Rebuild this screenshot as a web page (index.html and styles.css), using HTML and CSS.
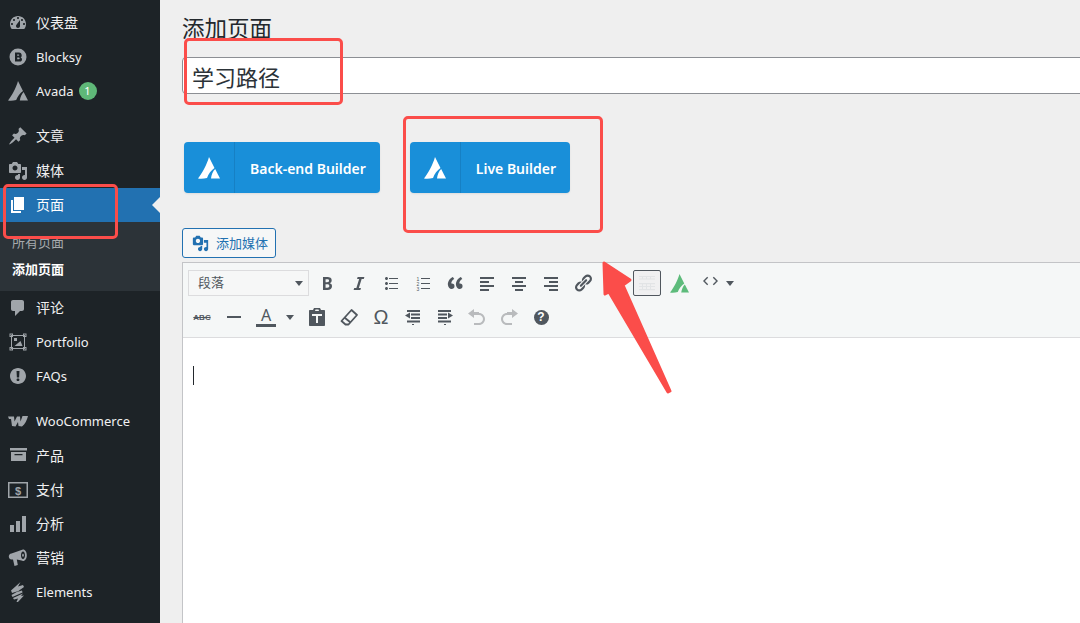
FILE: index.html
```html
<!DOCTYPE html>
<html lang="zh-CN">
<head>
  <meta charset="UTF-8" />
  <meta name="viewport" content="width=device-width, initial-scale=1.0"/>
  <title>添加页面</title>
  <link rel="stylesheet" href="styles.css">
</head>
<body>
  <aside class="sidebar">
    <nav class="menu">
      <a class="menu-item"><svg class="menu-icon" viewBox="0 0 20 20"><path fill-rule="evenodd" d="M3.76 16h12.48c1.1-1.37 1.76-3.11 1.76-5 0-4.42-3.58-8-8-8s-8 3.58-8 8c0 1.89.66 3.63 1.76 5zM10 4c.55 0 1 .45 1 1s-.45 1-1 1-1-.45-1-1 .45-1 1-1zM6 6c.55 0 1 .45 1 1s-.45 1-1 1-1-.45-1-1 .45-1 1-1zm8 0c.55 0 1 .45 1 1s-.45 1-1 1-1-.45-1-1 .45-1 1-1zm-5.37 5.55L12 7v6c0 1.1-.9 2-2 2s-2-.9-2-2c0-.57.24-1.08.63-1.45zM4 10c.55 0 1 .45 1 1s-.45 1-1 1-1-.45-1-1 .45-1 1-1zm12 0c.55 0 1 .45 1 1s-.45 1-1 1-1-.45-1-1 .45-1 1-1z"/></svg><span class="zh">仪表盘</span></a>
      <a class="menu-item"><svg class="menu-icon" viewBox="0 0 20 20"><path fill-rule="evenodd" d="M10 1.5a8.5 8.5 0 1 1 0 17 8.5 8.5 0 0 1 0-17zM7 5.5v9h5c1.2 0 2-.9 2-2.1 0-.9-.5-1.7-1.300-2 .6-.3 1-1 1-1.900 0-1.700-1-3-2.700-3zm2.200 1.900h1.300c.5 0 .8.300.8.700s-.3.700-.8.700H9.200zm0 3.200h1.700c.5 0 .8.300.8.800s-.3.800-.8.800H9.200z"/></svg>Blocksy</a>
      <a class="menu-item"><svg class="menu-icon" viewBox="0 0 20 20"><path d="M0 19.5C4 14.5 8 7 10 0l5 10C12 12 9.500 15.500 8.200 19c-2.700.7-5.500.9-8.200.5z"/><path d="M11.800 19.500c.5-3.500 1.800-6.500 3.800-8.500l4.400 8.500z"/></svg>Avada<span class="badge">1</span></a>

      <div class="menu-sep"></div>

      <a class="menu-item"><svg class="menu-icon" viewBox="0 0 20 20"><path d="M10.44 3.02l1.82-1.820 6.360 6.350-1.830 1.820c-1.050-.68-2.480-.57-3.410.36l-.75.75c-.92.93-1.040 2.350-.35 3.410l-1.830 1.820-2.410-2.410-2.800 2.790c-.42.42-3.380 2.710-3.800 2.290s1.860-3.390 2.280-3.810l2.790-2.790L4.100 9.360l1.830-1.820c1.050.69 2.480.57 3.400-.36l.75-.75c.93-.92 1.050-2.350.36-3.410z"/></svg><span class="zh">文章</span></a>
      <a class="menu-item"><svg class="menu-icon" viewBox="0 0 20 20"><path fill-rule="evenodd" d="M13 11V4c0-.55-.45-1-1-1h-1.670L9 1H5L3.670 3H2c-.55 0-1 .45-1 1v7c0 .55.45 1 1 1h10c.55 0 1-.45 1-1zM7 4.500c1.380 0 2.500 1.120 2.500 2.500S8.380 9.500 7 9.500 4.500 8.380 4.500 7 5.620 4.500 7 4.500zM14 6h5v10.500c0 1.380-1.120 2.500-2.500 2.500S14 17.880 14 16.500s1.120-2.500 2.500-2.500c.17 0 .34.02.5.05V9h-3V6zm-4 8.050V13h2v3.500c0 1.380-1.120 2.500-2.500 2.500S7 17.880 7 16.500 8.120 14 9.500 14c.17 0 .34.02.5.05z"/></svg><span class="zh">媒体</span></a>
      <a class="menu-item active"><svg class="menu-icon" viewBox="0 0 20 20"><path d="M6 15V2h10v13H6zm-1 1h8v2H3V5h2v11z"/></svg><span class="zh">页面</span></a>
      <div class="submenu">
        <a class="submenu-item">所有页面</a>
        <a class="submenu-item current">添加页面</a>
      </div>
      <a class="menu-item"><svg class="menu-icon" viewBox="0 0 20 20"><path d="M5 2h9c1.100 0 2 .9 2 2v7c0 1.100-.9 2-2 2h-2l-5 5v-5H5c-1.100 0-2-.9-2-2V4c0-1.100.9-2 2-2z"/></svg><span class="zh">评论</span></a>
      <a class="menu-item"><svg class="menu-icon portfolio" viewBox="0 0 20 20"><rect x="3.5" y="3.5" width="13" height="13"/><rect x="2" y="2" width="2.5" height="2.5"/><rect x="15.5" y="2" width="2.5" height="2.5"/><rect x="2" y="15.5" width="2.5" height="2.5"/><rect x="15.5" y="15.5" width="2.5" height="2.5"/><path d="M6 6h3v3H6zm6.500 3l2 5h-8z"/></svg>Portfolio</a>
      <a class="menu-item"><svg class="menu-icon" viewBox="0 0 20 20"><path fill-rule="evenodd" d="M10 2c4.420 0 8 3.580 8 8s-3.580 8-8 8-8-3.580-8-8 3.580-8 8-8zm1.130 9.380l.35-6.460H8.520l.35 6.460h2.260zm-.09 3.360c.24-.23.37-.55.37-.96 0-.42-.12-.74-.36-.97s-.59-.35-1.060-.35-.82.12-1.070.35-.37.55-.37.97c0 .41.13.73.38.96.26.23.61.34 1.060.34s.8-.11 1.050-.34z"/></svg>FAQs</a>

      <div class="menu-sep"></div>

      <a class="menu-item"><svg class="menu-icon woo" viewBox="0 0 20 12"><path d="M0 1.500h6l.5 5L9 1.500h3l.5 5 2-5.500H20c-1 4-3 8.500-6 10.500l-3.500-.5-.5-4-2.500 4.500-3.500-.5L3 4H1z"/></svg>WooCommerce</a>
      <a class="menu-item"><svg class="menu-icon" viewBox="0 0 20 20"><path fill-rule="evenodd" d="M2 3h17v2.500H2zm1 4h15v9H3zm3.500 2v1.300h8V9z"/></svg><span class="zh">产品</span></a>
      <a class="menu-item"><svg class="menu-icon" viewBox="0 0 20 20"><path fill-rule="evenodd" d="M0 2h20v16H0zm1.500 1.500v13h17v-13z"/><text class="money" x="10" y="14.5" text-anchor="middle">$</text></svg><span class="zh">支付</span></a>
      <a class="menu-item"><svg class="menu-icon" viewBox="0 0 20 20"><path d="M2 11h4v7H2zm6-4h4v11H8zm6-5h4v16h-4z"/></svg><span class="zh">分析</span></a>
      <a class="menu-item"><svg class="menu-icon" viewBox="0 0 20 20"><path fill-rule="evenodd" d="M15 1.500c2.200 0 3.800 2.500 3.800 5.700s-1.600 5.800-3.800 5.800c-.5 0-1-.2-1.500-.5L8.800 11.500l1 5.500-3.300 1-1.500-6.500H3.500C1.800 11.500.8 10 .8 8.500S1.800 5.700 3.500 5.500l10-3.500c.5-.3 1-.5 1.500-.5zm0 2c-1.100 0-2 1.700-2 3.700S13.900 11 15 11s2-1.800 2-3.800-.9-3.700-2-3.700zm0 2.200c.5 0 .9.700.9 1.500s-.4 1.500-.9 1.500-.9-.7-.9-1.500.4-1.500.9-1.500z"/></svg><span class="zh">营销</span></a>
      <a class="menu-item"><svg class="menu-icon" viewBox="0 0 20 20"><path d="M12.500 0L3 8.500l1 2.500 6.500-2L3.500 13l1 2 10-4.500-.5-2-5 1.500 7-5-1-2-5 1.500zM15 11.500L5 16l1 1.500 4-1-1.500 3.500 1 .5 6.500-7-3 .5z"/></svg>Elements</a>
    </nav>
  </aside>

  <main class="content">
    <h1 class="page-title">添加页面</h1>
    <div class="title-input">学习路径</div>

    <div class="builder-row">
      <a class="builder-btn"><span class="builder-icon"><svg viewBox="0 0 20 20"><path d="M0 19.500C4 14.500 8 7 10 0l5 10C12 12 9.500 15.500 8.200 19c-2.700.7-5.500.9-8.200.5z"/><path d="M11.800 19.500c.5-3.500 1.800-6.500 3.800-8.500l4.400 8.500z"/></svg></span><span class="builder-label">Back-end Builder</span></a>
      <a class="builder-btn"><span class="builder-icon"><svg viewBox="0 0 20 20"><path d="M0 19.500C4 14.500 8 7 10 0l5 10C12 12 9.500 15.500 8.200 19c-2.700.7-5.500.9-8.200.5z"/><path d="M11.800 19.500c.5-3.500 1.800-6.500 3.800-8.500l4.400 8.500z"/></svg></span><span class="builder-label">Live Builder</span></a>
    </div>

    <a class="media-btn"><svg viewBox="0 0 20 20"><path fill-rule="evenodd" d="M13 11V4c0-.55-.45-1-1-1h-1.670L9 1H5L3.670 3H2c-.55 0-1 .45-1 1v7c0 .55.45 1 1 1h10c.55 0 1-.45 1-1zM7 4.500c1.380 0 2.500 1.120 2.500 2.500S8.380 9.500 7 9.500 4.500 8.380 4.500 7 5.620 4.500 7 4.500zM14 6h5v10.500c0 1.380-1.120 2.500-2.500 2.500S14 17.880 14 16.500s1.120-2.500 2.500-2.500c.17 0 .34.02.5.05V9h-3V6zm-4 8.050V13h2v3.500c0 1.380-1.120 2.500-2.500 2.500S7 17.880 7 16.500 8.120 14 9.500 14c.17 0 .34.02.5.05z"/></svg><span class="media-label">添加媒体</span></a>

    <section class="editor">
      <div class="toolbar">
        <div class="tool-row">
          <div class="format-select">段落<span class="caret"></span></div>
          <span class="tool"><svg viewBox="0 0 20 20"><path fill-rule="evenodd" d="M6 4v13h4.540c1.370 0 2.460-.33 3.260-1 .8-.66 1.200-1.580 1.200-2.770 0-.84-.17-1.510-.51-2.010s-.9-.85-1.670-1.030v-.09c.57-.1 1.020-.4 1.360-.9s.51-1.130.51-1.910c0-1.140-.39-1.980-1.170-2.500C12.750 4.260 11.500 4 9.780 4H6zm2.570 5.150V6.260h1.360c.73 0 1.270.11 1.610.32.34.22.51.58.51 1.070 0 .54-.16.92-.47 1.150s-.82.35-1.510.35h-1.500zm0 2.190h1.600c1.440 0 2.160.53 2.160 1.610 0 .6-.17 1.050-.51 1.340s-.86.43-1.570.43H8.570v-3.380z"/></svg></span>
          <span class="tool"><svg viewBox="0 0 20 20"><path d="M14.780 6h-2.130l-2.800 9h2.120l-.62 2H4.600l.62-2h2.140l2.800-9H8.030l.62-2h6.750z"/></svg></span>
          <span class="tool"><svg viewBox="0 0 20 20"><path d="M5.500 7C4.670 7 4 6.330 4 5.500 4 4.680 4.670 4 5.500 4 6.320 4 7 4.680 7 5.500 7 6.330 6.320 7 5.500 7zM8 5h9v1H8V5zm-2.500 7c-.83 0-1.500-.67-1.500-1.500C4 9.680 4.670 9 5.500 9c.82 0 1.500.68 1.500 1.500 0 .83-.68 1.500-1.500 1.500zM8 10h9v1H8v-1zm-2.500 7c-.83 0-1.500-.67-1.500-1.500 0-.82.67-1.500 1.500-1.500.82 0 1.500.68 1.500 1.500 0 .83-.68 1.500-1.500 1.500zM8 15h9v1H8v-1z"/></svg></span>
          <span class="tool"><svg viewBox="0 0 20 20"><path d="M8 5h9v1H8zm0 5h9v1H8zm0 5h9v1H8z"/><text class="digits" x="5" y="7.5">1</text><text class="digits" x="5" y="12.5">2</text><text class="digits" x="5" y="17.5">3</text></svg></span>
          <span class="tool"><svg viewBox="0 0 20 20"><path d="M9.490 13.220c0-.74-.2-1.380-.61-1.900-.62-.78-1.830-.88-2.530-.72-.29-1.650 1.110-3.750 2.920-4.650L7.880 4c-2.730 1.300-5.420 4.280-4.960 8.050C3.210 14.430 4.590 16 6.540 16c.85 0 1.560-.25 2.120-.75s.83-1.180.83-2.030zm8.050 0c0-.74-.2-1.380-.61-1.900-.63-.78-1.830-.88-2.530-.72-.29-1.650 1.110-3.750 2.920-4.650L15.930 4c-2.730 1.300-5.410 4.280-4.950 8.050.29 2.380 1.660 3.950 3.610 3.950.85 0 1.560-.25 2.120-.75s.83-1.180.83-2.030z"/></svg></span>
          <span class="tool"><svg viewBox="0 0 20 20"><path d="M3 4h14v2H3zm0 4h9v2H3zm0 4h14v2H3zm0 4h9v2H3z"/></svg></span>
          <span class="tool"><svg viewBox="0 0 20 20"><path d="M3 4h14v2H3zm3 4h8v2H6zm-3 4h14v2H3zm3 4h8v2H6z"/></svg></span>
          <span class="tool"><svg viewBox="0 0 20 20"><path d="M3 4h14v2H3zm5 4h9v2H8zm-5 4h14v2H3zm5 4h9v2H8z"/></svg></span>
          <span class="tool"><svg viewBox="0 0 20 20"><path d="M17.740 2.760c1.680 1.690 1.680 4.410 0 6.100l-1.530 1.520c-1.120 1.120-2.700 1.470-4.140 1.090l2.620-2.610.76-.77.76-.76c.84-.84.84-2.200 0-3.040-.84-.85-2.200-.85-3.040 0l-.77.76-3.380 3.380c-.37-1.440-.02-3.020 1.100-4.140l1.520-1.530c1.690-1.680 4.420-1.680 6.100 0zM8.590 13.430l5.340-5.340c.42-.42.42-1.100 0-1.520-.44-.43-1.130-.39-1.530 0l-5.330 5.340c-.42.42-.42 1.100 0 1.520.44.43 1.130.39 1.520 0zm-.76 2.290l4.140-4.150c.38 1.440.03 3.020-1.090 4.140l-1.520 1.530c-1.690 1.680-4.410 1.680-6.100 0-1.680-1.680-1.680-4.420 0-6.100l1.530-1.520c1.120-1.120 2.700-1.470 4.140-1.100l-4.140 4.150c-.85.84-.85 2.200 0 3.050.84.84 2.200.84 3.040 0z"/></svg></span>
          <span class="tool"></span>
          <span class="tool"><span class="table-btn"><svg viewBox="0 0 22 18"><path d="M3 2h16v1H3zm0 2.500h16v1H3zM3 9h16v1.300H3zm0 3h16v1H3zm0 3h16v1.300H3zM6 2h1v3.500H6zm4 0h1v3.500h-1zm4 0h1v3.500h-1zM6 10h1v5H6zm4 0h1v5h-1zm4 0h1v5h-1z" fill="#e2e4e6"/></svg></span></span>
          <span class="tool"><svg class="avada-mark" viewBox="0 0 20 20"><path d="M0 19.500C4 14.500 8 7 10 0l5 10C12 12 9.500 15.500 8.200 19c-2.700.7-5.500.9-8.200.5z"/><path d="M11.800 19.500c.5-3.500 1.800-6.500 3.800-8.500l4.400 8.500z"/></svg></span>
          <span class="tool tool-split"><svg class="code-mark" viewBox="0 0 16 10"><polyline points="5,1 1,5 5,9" /><polyline points="11,1 15,5 11,9" /></svg><span class="caret"></span></span>
        </div>
        <div class="tool-row tool-row-second">
          <span class="tool"><span class="strike">ABC</span></span>
          <span class="tool"><svg viewBox="0 0 20 20"><path d="M3 9h14v2H3z"/></svg></span>
          <span class="tool tool-color"><span class="color-a">A</span><span class="caret"></span></span>
          <span class="tool"><svg viewBox="0 0 20 20"><path fill-rule="evenodd" d="M7 1h6l1 2h3c.6 0 1 .4 1 1v14c0 .6-.4 1-1 1H3c-.6 0-1-.4-1-1V4c0-.6.4-1 1-1h3zm1.500 1.500L8 4h4l-.5-1.500zM5 7v2h4v7h2V9h4V7z"/></svg></span>
          <span class="tool"><svg class="eraser" viewBox="0 0 20 20"><path d="M12.500 3L18 8l-8.500 9.500H6.500L2.500 14z"/><path d="M5.500 10.500l6 5"/></svg></span>
          <span class="tool omega">Ω</span>
          <span class="tool"><svg viewBox="0 0 20 20"><path d="M4 3h13v2H4zm4 3.500h9v2H8zm0 3.500h9v2H8zm-6-1.500L7 5.500v6zM4 13.500h13v2H4zM9 17h2v1H9z"/></svg></span>
          <span class="tool"><svg viewBox="0 0 20 20"><path d="M3 3h13v2H3zm0 3.500h9v2H3zM3 10h9v2H3zm15-1.500l-5 3v-6zM3 13.500h13v2H3zM9 17h2v1H9z"/></svg></span>
          <span class="tool disabled"><svg viewBox="0 0 20 20"><path d="M12 5H7V2L1 6.500 7 11V8h5c2.200 0 4 1.800 4 4s-1.800 4-4 4H7v2h5c3.300 0 6-2.700 6-6s-2.700-6-6-6z"/></svg></span>
          <span class="tool disabled"><svg viewBox="0 0 20 20"><path d="M8 5h5V2l6 4.500-6 4.500V8H8c-2.200 0-4 1.800-4 4s1.800 4 4 4h5v2H8c-3.300 0-6-2.700-6-6s2.700-6 6-6z"/></svg></span>
          <span class="tool"><span class="help">?</span></span>
        </div>
      </div>
      <div class="editor-body"><span class="cursor"></span></div>
    </section>
  </main>

  <!-- marcas rojas sobre la captura -->
  <div class="mark mark-menu"></div>
  <div class="mark mark-title"></div>
  <div class="mark mark-live"></div>
  <svg class="mark-arrow" viewBox="0 0 1080 623"><path d="M604 263 L630 280 L623 285 L670 391 L668 392 L609 292 L605 294 Z"/></svg>
</body>
</html>
```

FILE: styles.css
```css
* {
  box-sizing: border-box;
}

html,
body {
  height: 100%;
}

body {
  margin: 0;
  display: flex;
  overflow: hidden;
  background: #efefef;
  color: #2c3338;
  font-family: "Noto Sans", "Noto Sans CJK SC", sans-serif;
  font-size: 13px;
}

/* sidebar */
.sidebar {
  flex: 0 0 160px;
  background: #1d2327;
  color: #f0f0f1;
  padding-top: 6px;
}

.menu-item {
  display: flex;
  align-items: center;
  height: 34.2px;
  padding-left: 36px;
  position: relative;
  font-size: 13px;
  white-space: nowrap;
}

.zh {
  margin-top: -2px;
  font-size: 14px;
}

.menu-icon {
  position: absolute;
  left: 8px;
  top: 7px;
  width: 20px;
  height: 20px;
  fill: #a0a5aa;
}

.menu-icon.woo {
  height: 12px;
  top: 11px;
}

.portfolio rect {
  fill: none;
  stroke: #a0a5aa;
  stroke-width: 1;
}

.money {
  font: bold 11px "Liberation Sans", sans-serif;
  fill: #a0a5aa;
}

.badge {
  width: 18px;
  height: 18px;
  margin-left: 5px;
  border-radius: 50%;
  background: #5fb878;
  color: #fff;
  font-size: 11px;
  line-height: 18px;
  text-align: center;
}

.menu-sep {
  height: 10.8px;
}

.menu-item.active {
  background: #2271b1;
  color: #fff;
}

.menu-item.active .menu-icon {
  fill: #fff;
}

.menu-item.active::after {
  content: "";
  position: absolute;
  right: 0;
  top: 9px;
  border: 8px solid transparent;
  border-right-color: #efefef;
}

.submenu {
  height: 69px;
  padding-top: 8px;
  background: #2c3338;
}

.submenu-item {
  display: block;
  height: 27px;
  padding-left: 12px;
  line-height: 24px;
  font-size: 13px;
  color: #a7aaad;
}

.submenu-item.current {
  color: #fff;
  font-weight: 700;
}

/* contenido */
.content {
  flex: 1;
  min-width: 0;
  padding-left: 22px;
  margin-right: -6px;
  display: flex;
  flex-direction: column;
  align-items: flex-start;
}

.page-title {
  height: 57px;
  margin: 0;
  padding-top: 14px;
  font-size: 22.5px;
  font-weight: 400;
  line-height: 30px;
  color: #23282d;
}

.title-input {
  width: 100%;
  height: 37px;
  padding-left: 9px;
  background: #fff;
  border: 1px solid #8c8f94;
  border-radius: 4px 0 0 4px;
  font-size: 22px;
  line-height: 39px;
}

.builder-row {
  display: flex;
  gap: 30px;
  margin: 48px 0 0 2px;
}

.builder-btn {
  display: flex;
  height: 51px;
  background: #198fd9;
  border-radius: 4px;
  color: #fff;
  box-shadow: 0 1px 2px rgba(0, 0, 0, 0.08);
}

.builder-icon {
  display: flex;
  align-items: center;
  justify-content: center;
  width: 51px;
  border-right: 1px solid #1680c4;
}

.builder-icon svg {
  width: 22px;
  height: 22px;
  fill: #fff;
}

.builder-label {
  padding: 0 14px 0 15px;
  font-size: 14px;
  font-weight: 600;
  line-height: 53px;
}

.media-btn {
  display: flex;
  align-items: center;
  gap: 7px;
  height: 30px;
  margin-top: 35px;
  padding: 0 7px 0 9px;
  background: #f6f7f7;
  border: 1px solid #2271b1;
  border-radius: 3px;
  color: #2271b1;
  font-size: 13px;
}

.media-btn svg {
  width: 17px;
  height: 17px;
  fill: #2271b1;
}

.media-label {
  margin-top: -2px;
}

/* editor */
.editor {
  flex: 1;
  width: 100%;
  margin-top: 4px;
  display: flex;
  flex-direction: column;
  border: 1px solid #c3c4c7;
  border-bottom: 0;
  background: #fff;
}

.toolbar {
  height: 75px;
  padding: 3px 5px 0;
  background: #f5f7f7;
  border-bottom: 1px solid #dcdcde;
}

.tool-row {
  display: flex;
  align-items: center;
  height: 34px;
}

.tool-row-second {
  margin-left: -2px;
}

.format-select {
  position: relative;
  width: 121px;
  height: 26px;
  margin-right: 2px;
  padding-left: 9px;
  background: #f6f7f7;
  border: 1px solid #dcdcde;
  color: #50575e;
  font-size: 13px;
  line-height: 22px;
}

.format-select .caret {
  position: absolute;
  right: 5px;
  top: 10px;
}

.caret {
  display: inline-block;
  border: 4px solid transparent;
  border-top: 5px solid #50575e;
  border-bottom: 0;
}

.tool {
  display: flex;
  align-items: center;
  justify-content: center;
  flex: 0 0 32px;
  height: 26px;
  color: #50575e;
}

.tool svg {
  width: 20px;
  height: 20px;
  fill: #50575e;
}

.tool.disabled svg {
  fill: #b9bbbd;
}

.digits {
  font: 5px "Liberation Sans", sans-serif;
  fill: #50575e;
  text-anchor: middle;
}

.table-btn {
  display: flex;
  align-items: center;
  justify-content: center;
  width: 28px;
  height: 26px;
  background: #f0f0f1;
  border: 1px solid #50575e;
  border-radius: 2px;
}

.tool .table-btn svg {
  width: 22px;
  height: 18px;
}

.tool .avada-mark {
  width: 19px;
  height: 19px;
  fill: #5dbb7b;
}

.tool-split {
  flex-basis: 52px;
  justify-content: flex-start;
  gap: 8px;
  padding-left: 8px;
}

.tool .code-mark {
  width: 15px;
  height: 10px;
  margin-top: -4px;
  fill: none;
  stroke: #50575e;
  stroke-width: 1.5;
}

.tool .eraser {
  fill: none;
  stroke: #50575e;
  stroke-width: 1.8;
  stroke-linejoin: round;
}

.strike {
  font: 700 8px "Liberation Sans", sans-serif;
  text-decoration: line-through;
}

.tool-color {
  flex-basis: 51px;
  gap: 10px;
  justify-content: flex-start;
  padding-left: 6px;
}

.color-a {
  width: 20px;
  height: 20px;
  border-bottom: 3px solid #50575e;
  font-size: 16px;
  line-height: 17px;
  text-align: center;
}

.omega {
  font: 400 20px "Liberation Sans", sans-serif;
}

.help {
  width: 15px;
  height: 15px;
  border-radius: 50%;
  background: #50575e;
  color: #fff;
  font: 700 12px/15px "Liberation Sans", sans-serif;
  text-align: center;
}

.editor-body {
  flex: 1;
  padding: 28px 0 0 10px;
}

.cursor {
  display: block;
  width: 1px;
  height: 19px;
  background: #23282d;
}

/* anotaciones */
.mark {
  position: absolute;
  border: 3px solid #fb4d4a;
  border-radius: 5px;
}

.mark-menu {
  left: 3px;
  top: 184px;
  width: 115px;
  height: 55px;
}

.mark-title {
  left: 184px;
  top: 38px;
  width: 159px;
  height: 67px;
}

.mark-live {
  left: 403px;
  top: 116px;
  width: 200px;
  height: 117px;
}

.mark-arrow {
  position: absolute;
  left: 0;
  top: 0;
  width: 1080px;
  height: 623px;
  pointer-events: none;
}

.mark-arrow path {
  fill: #fb4d4a;
  stroke: #fb4d4a;
  stroke-width: 3;
  stroke-linejoin: round;
}
```
